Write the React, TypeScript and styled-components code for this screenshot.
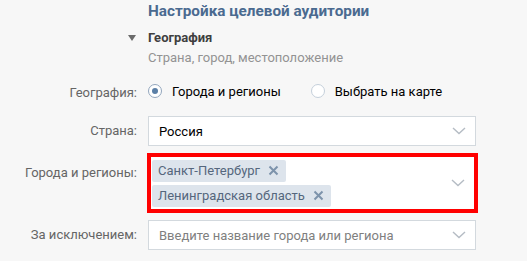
import React from 'react';
import styled, { createGlobalStyle } from 'styled-components';

const GlobalStyle = createGlobalStyle`
  html, body {
    margin: 0;
    padding: 0;
    background: #f7f7f7;
  }
  body {
    font-family: Roboto, "Open Sans", Arial, sans-serif;
    font-size: 13px;
    color: #000;
  }
`;

const Page = styled.div`
  width: 527px;
  height: 261px;
  overflow: hidden;
  padding-top: 1px;
  box-sizing: border-box;
`;

const Heading = styled.div`
  margin-left: 148px;
  font-size: 15.3px;
  font-weight: 700;
  color: #4a6a90;
  line-height: 20px;
`;

const Section = styled.div`
  display: flex;
  align-items: center;
  margin-left: 128px;
  margin-top: 8px;
  line-height: 18px;
`;

const Arrow = styled.span`
  width: 0;
  height: 0;
  border-left: 4px solid transparent;
  border-right: 4px solid transparent;
  border-top: 6px solid #6b6b6b;
  margin-right: 12px;
`;

const SectionTitle = styled.span`
  font-size: 13px;
  font-weight: 700;
  color: #3f3f3f;
`;

const Hint = styled.div`
  margin-left: 148px;
  margin-top: 3px;
  color: #939393;
  line-height: 16px;
`;

const Form = styled.div`
  display: grid;
  grid-template-columns: 137px 330px;
  column-gap: 11px;
  row-gap: 7px;
  margin-top: 10px;
  align-items: center;
`;

const Label = styled.div<{ $top?: boolean }>`
  text-align: right;
  color: #656565;
  line-height: 16px;
  white-space: nowrap;
  align-self: ${p => (p.$top ? 'start' : 'center')};
  margin-top: ${p => (p.$top ? '12px' : '0')};
`;

const Radios = styled.div`
  display: flex;
  align-items: center;
  height: 30px;
  margin-bottom: 3px;
`;

const RadioItem = styled.label`
  display: flex;
  align-items: center;
  flex-shrink: 0;
  white-space: nowrap;
  margin-right: 30px;
  color: #000;
`;

const RadioCircle = styled.span<{ $checked?: boolean }>`
  width: 12px;
  height: 12px;
  border-radius: 50%;
  border: 1px solid ${p => (p.$checked ? '#93a6bd' : '#c5d0db')};
  background: #fff;
  margin-right: 10px;
  position: relative;
  &::after {
    content: '';
    display: ${p => (p.$checked ? 'block' : 'none')};
    position: absolute;
    left: 3px;
    top: 3px;
    width: 6px;
    height: 6px;
    border-radius: 50%;
    background: #5b7fa6;
  }
`;

const Select = styled.div`
  display: flex;
  align-items: center;
  width: 328px;
  height: 30px;
  box-sizing: border-box;
  border: 1px solid #d3d9de;
  background: #fff;
  padding-left: 10px;
`;

const Value = styled.span<{ $placeholder?: boolean }>`
  flex: 1;
  color: ${p => (p.$placeholder ? '#7f7f7f' : '#000')};
`;

const Chevron = () => (
  <svg width="14" height="8" viewBox="0 0 14 8" style={{ marginRight: 9 }}>
    <path d="M1 1l6 5.5L13 1" fill="none" stroke="#b5bcc4" strokeWidth="1.4" />
  </svg>
);

const Highlight = styled.div`
  margin-left: -1px;
  width: 331px;
  height: 60px;
  border: 4px solid #ff0000;
  box-sizing: border-box;
  background: #fff;
  display: flex;
  align-items: center;
  padding: 0 0 0 1px;
`;

const Tags = styled.div`
  flex: 1;
  display: flex;
  flex-direction: column;
  align-items: flex-start;
  gap: 3px;
`;

const Tag = styled.div`
  display: flex;
  align-items: center;
  height: 22px;
  padding: 0 7px 0 6px;
  background: #dde4ec;
  border-radius: 2px;
  color: #55677d;
`;

const TagClose = () => (
  <svg width="11" height="11" viewBox="0 0 11 11" style={{ marginLeft: 8 }}>
    <path d="M1.5 1.5l8 8M9.5 1.5l-8 8" stroke="#7d93ab" strokeWidth="2" />
  </svg>
);

const Geo = () => {
  return (
    <Page>
      <GlobalStyle />
      <Heading>Настройка целевой аудитории</Heading>
      <Section>
        <Arrow />
        <SectionTitle>География</SectionTitle>
      </Section>
      <Hint>Страна, город, местоположение</Hint>
      <Form>
        <Label>География:</Label>
        <Radios>
          <RadioItem>
            <RadioCircle $checked />
            Города и регионы
          </RadioItem>
          <RadioItem>
            <RadioCircle />
            Выбрать на карте
          </RadioItem>
        </Radios>

        <Label>Страна:</Label>
        <Select>
          <Value>Россия</Value>
          <Chevron />
        </Select>

        <Label $top>Города и регионы:</Label>
        <Highlight>
          <Tags>
            <Tag>Санкт-Петербург<TagClose /></Tag>
            <Tag>Ленинградская область<TagClose /></Tag>
          </Tags>
          <Chevron />
        </Highlight>

        <Label>За исключением:</Label>
        <Select>
          <Value $placeholder>Введите название города или региона</Value>
          <Chevron />
        </Select>
      </Form>
    </Page>
  );
};

export default Geo;
